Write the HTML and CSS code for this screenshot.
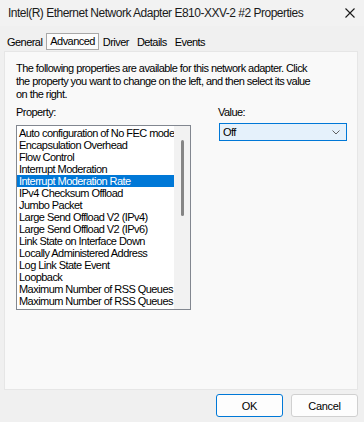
FILE: index.html
```html
<!DOCTYPE html>
<html>
<head>
<meta charset="utf-8">
<link rel="stylesheet" href="styles.css">
</head>
<body>
<div class="dialog">
  <div class="titlebar">
    <span class="title">Intel(R) Ethernet Network Adapter E810-XXV-2 #2 Properties</span>
    <svg class="close" width="10" height="10" viewBox="0 0 10 10"><path d="M0.5 0.5 L9.5 9.5 M9.5 0.5 L0.5 9.5" stroke="#1a1a1a" stroke-width="1.1" fill="none"/></svg>
  </div>
  <div class="tabs">
    <span class="tab">General</span>
    <span class="tab active">Advanced</span>
    <span class="tab">Driver</span>
    <span class="tab">Details</span>
    <span class="tab">Events</span>
  </div>
  <div class="panel">
    <p class="desc">The following properties are available for this network adapter. Click the property you want to change on the left, and then select its value on the right.</p>
    <div class="fields">
      <div class="prop-col">
        <div class="label">Property:</div>
        <div class="listbox">
          <div class="items">
            <div class="item">Auto configuration of No FEC mode</div>
            <div class="item">Encapsulation Overhead</div>
            <div class="item">Flow Control</div>
            <div class="item">Interrupt Moderation</div>
            <div class="item selected">Interrupt Moderation Rate</div>
            <div class="item">IPv4 Checksum Offload</div>
            <div class="item">Jumbo Packet</div>
            <div class="item">Large Send Offload V2 (IPv4)</div>
            <div class="item">Large Send Offload V2 (IPv6)</div>
            <div class="item">Link State on Interface Down</div>
            <div class="item">Locally Administered Address</div>
            <div class="item">Log Link State Event</div>
            <div class="item">Loopback</div>
            <div class="item">Maximum Number of RSS Queues</div>
            <div class="item">Maximum Number of RSS Queues</div>
          </div>
          <div class="scrollbar"><div class="thumb"></div></div>
        </div>
      </div>
      <div class="value-col">
        <div class="label">Value:</div>
        <div class="select">
          <span>Off</span>
          <svg width="8" height="5" viewBox="0 0 8 5"><path d="M0.5 0.5 L4 4 L7.5 0.5" stroke="#606060" stroke-width="1" fill="none"/></svg>
        </div>
      </div>
    </div>
  </div>
  <div class="buttons">
    <button class="btn default">OK</button>
    <button class="btn">Cancel</button>
  </div>
</div>
</body>
</html>
```
FILE: styles.css
```css
html, body {
  margin: 0;
  padding: 0;
  background: #f0f0f0;
}
.dialog {
  width: 364px;
  height: 422px;
  display: flex;
  flex-direction: column;
  font-family: "Liberation Sans", Arial, sans-serif;
  font-size: 11px;
  letter-spacing: -0.55px;
  color: #000;
  background: #f0f0f0;
}
.titlebar {
  height: 26px;
  display: flex;
  align-items: center;
  justify-content: space-between;
  padding: 0 9px 0 8px;
  background: #f2f2f2;
  box-sizing: border-box;
}
.title {
  font-size: 12px;
  color: #1a1a1a;
  letter-spacing: -0.5px;
}
.close {
  display: block;
}
.tabs {
  display: flex;
  margin-top: 8px;
  padding-left: 3px;
  height: 16px;
  align-items: center;
}
.tab {
  padding: 1px 3px;
  border: 1px solid transparent;
  line-height: 12px;
}
.tab.active {
  border-color: #a8a8a8;
  background: #fcfcfc;
  margin-top: -2px;
  padding-bottom: 2px;
}
.panel {
  margin: 1px 6px 0 4px;
  height: 339px;
  box-sizing: border-box;
  background: #f9f9f9;
  border: 1px solid #e6e6e6;
  padding: 10px 11px 0 11px;
}
.desc {
  margin: 0;
  line-height: 13px;
  width: 300px;
}
.fields {
  display: flex;
  margin-top: 5px;
}
.label {
  line-height: 12px;
  height: 13px;
}
.prop-col {
  width: 175px;
}
.listbox {
  margin-top: 6px;
  width: 175px;
  height: 185px;
  box-sizing: border-box;
  border: 1px solid #828790;
  background: #fff;
  display: flex;
  overflow: hidden;
}
.items {
  flex: 1;
  overflow: hidden;
  padding-top: 1px;
}
.item {
  height: 12px;
  line-height: 12px;
  padding-left: 2px;
  white-space: nowrap;
  overflow: hidden;
}
.item.selected {
  background: #0078d7;
  color: #fff;
}
.scrollbar {
  width: 16px;
  background: #f2f2f2;
  display: flex;
  justify-content: center;
  padding-top: 14px;
  box-sizing: border-box;
}
.thumb {
  width: 3px;
  height: 76px;
  border-radius: 2px;
  background: #858585;
}
.value-col {
  margin-left: 26px;
}
.value-col .label {
  padding-left: 1px;
}
.select {
  margin-top: 4px;
  margin-left: 2px;
  width: 128px;
  height: 18px;
  box-sizing: border-box;
  border: 1px solid #0078d7;
  background: #e5f1fb;
  display: flex;
  align-items: center;
  justify-content: space-between;
  padding: 0 6px 0 3px;
}
.select svg {
  display: block;
}
.buttons {
  display: flex;
  justify-content: flex-end;
  gap: 8px;
  padding: 4px 6px 0 0;
}
.btn {
  width: 67px;
  height: 23px;
  font-family: "Liberation Sans", Arial, sans-serif;
  font-size: 11px;
  letter-spacing: -0.3px;
  color: #000;
  background: #fdfdfd;
  border: 1px solid #d0d0d0;
  border-radius: 3px;
  padding: 0;
}
.btn.default {
  border-color: #0078d7;
}
```
